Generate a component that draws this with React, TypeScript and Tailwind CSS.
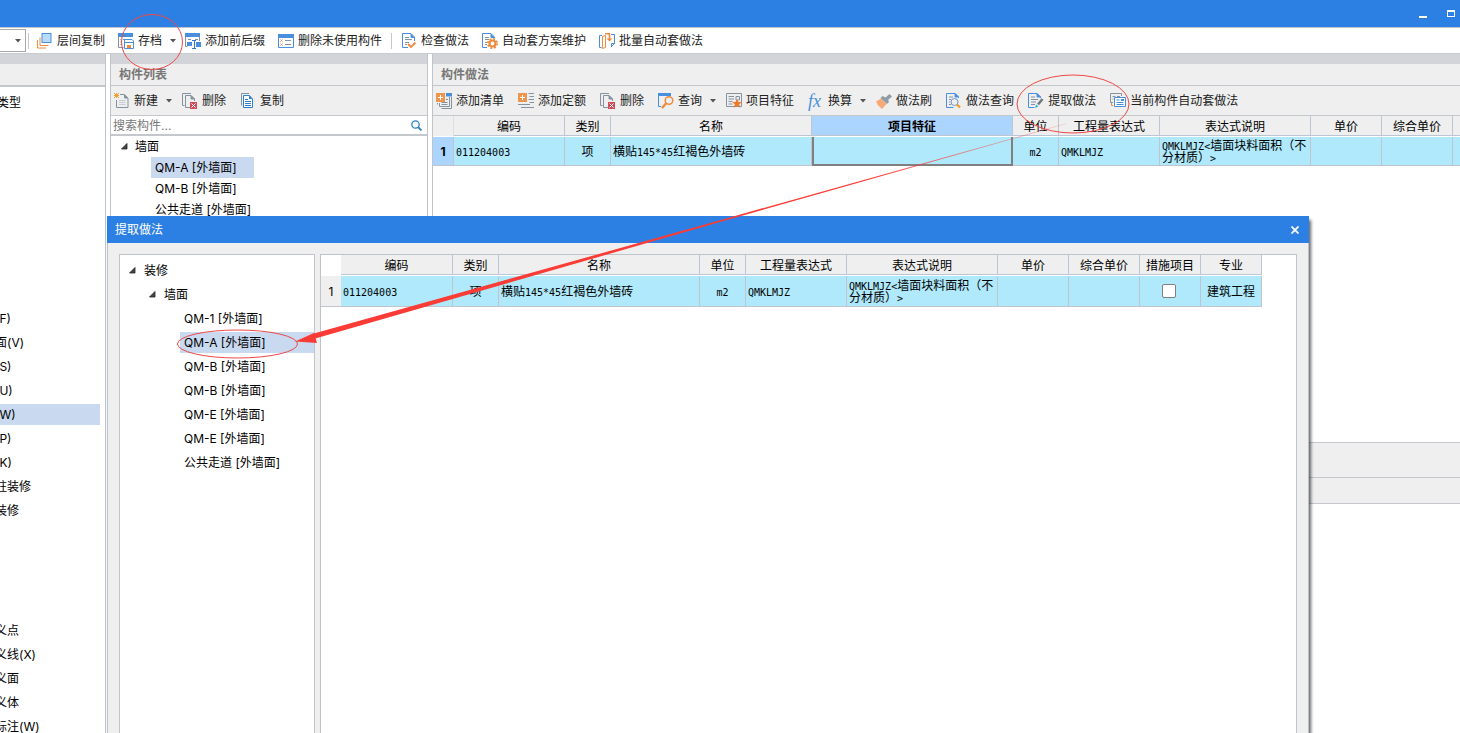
import type { ReactNode } from 'react';

const BLUE = '#4a8fde';
const ORANGE = '#ee8b3c';
const GRAY = '#8592a0';

function Icon({ children }: { children: ReactNode }) {
  return (
    <svg width="16" height="16" viewBox="0 0 16 16" fill="none" className="shrink-0" aria-hidden="true">
      {children}
    </svg>
  );
}

const icons = {
  layers: (
    <Icon>
      <rect x="5" y=".5" width="9" height="9" fill="#b9dbff" stroke={BLUE} />
      <path d="M.5 7v8H9M3 4.500V12.500h8.500" stroke={ORANGE} />
    </Icon>
  ),
  archive: (
    <Icon>
      <path d="M0 0h15v4H0z" fill={BLUE} />
      <path d="M.5 4v10.500h5" stroke={GRAY} />
      <path d="M2.500 6.500h1M2.500 9h1M2.500 11.500h1M5 6.500h2" stroke={GRAY} />
      <path d="M6.500 6.500h7.500l1.500 1.500v7.500h-9z" fill="#fff" stroke={BLUE} />
      <path d="M7 9.500h8" stroke={BLUE} />
      <path d="M9 12h4v3H9z" fill={ORANGE} />
    </Icon>
  ),
  affix: (
    <Icon>
      <path d="M0 0h15v4H0z" fill={BLUE} />
      <path d="M.5 4v9.500h2M14.500 4v4M3 6.500h3M10 6.500h3" stroke={GRAY} />
      <path d="M2 9h5v4H2zM11 9h5v5h-5z" fill={BLUE} />
      <path d="M7 7.500h4M9.500 7.500v8M7 15.500h4" stroke="#2f78cc" />
    </Icon>
  ),
  unused: (
    <Icon>
      <path d="M0 1h16v4H0z" fill={BLUE} />
      <path d="M.5 5v9.500h15V5" stroke={BLUE} />
      <path d="M2.500 6.500l2 2M4.500 6.500l-2 2M2.500 10.500l2 2M4.500 10.500l-2 2" stroke={ORANGE} />
      <path d="M7 7.500h6M7 11.500h6" stroke={GRAY} />
    </Icon>
  ),
  check: (
    <Icon>
      <path d="M13.500 8V4L10 .5H1.500v14H7" stroke={BLUE} />
      <path d="M10 1v3.500h3.500" fill={BLUE} stroke={BLUE} />
      <path d="M4 4.500h4M4 6.500h7M4 9.500h4M4 11.500h2" stroke={GRAY} />
      <path d="M7 11l3 3 4.500-4.500" stroke={ORANGE} strokeWidth="1.800" />
    </Icon>
  ),
  gear: (
    <Icon>
      <path d="M12.500 5V4L9 .5H.5v14H5" stroke={BLUE} />
      <path d="M9 1v3.500h3.500" fill={BLUE} stroke={BLUE} />
      <path d="M3 4.500h4M3 6.500h4M3 9.500h2M3 11.500h2" stroke={GRAY} />
      <circle cx="10.500" cy="10.500" r="4.700" stroke={ORANGE} strokeWidth="1.600" strokeDasharray="2 1.690" />
      <circle cx="10.500" cy="10.500" r="3" stroke={ORANGE} strokeWidth="2.200" />
    </Icon>
  ),
  batch: (
    <Icon>
      <path d="M3 2.500H.5v12h2M12 1.500h3.500v9l-3 3" stroke={BLUE} />
      <path d="M12.500 14v-3.500h3" stroke={BLUE} />
      <path d="M3.500 3.500l3-1v12l-3 1z" fill="#fff" stroke={ORANGE} />
      <path d="M6 .8h4.500v6" stroke={ORANGE} strokeWidth="1.600" />
      <path d="M7.500 5.500l3 3 3-3z" fill={ORANGE} />
    </Icon>
  ),
  create: (
    <Icon>
      <path d="M6 1.500h4.500l3.500 3.500v9.500H2.500V7" stroke={GRAY} />
      <path d="M10.500 1.500V5H14" fill={GRAY} stroke={GRAY} />
      <path d="M5 7.500h6.500M5 9.500h6.500M5 11.500h6.500" stroke="#c5cbd1" />
      <path d="M0 0l5 5M5 0L0 5M2.500 0v5M0 2.500h5" stroke="#f0a030" />
    </Icon>
  ),
  remove: (
    <Icon>
      <path d="M2.500 12.500h-2V.5H9" stroke={GRAY} />
      <path d="M8 14.500H3.500v-12H9L12.500 6v2" stroke={GRAY} />
      <path d="M9 2.500V6h3.500z" fill={GRAY} stroke={GRAY} />
      <path d="M8 9h7v7H8z" fill="#cf4b55" />
      <path d="M9.500 10.500l4 4M13.500 10.500l-4 4" stroke="#fff" />
    </Icon>
  ),
  copy: (
    <Icon>
      <path d="M1.500 12.500V.5H9" stroke={GRAY} />
      <path d="M3.500 2.500h6L12.500 6v8.500h-9z" fill="#fff" stroke="#2f7fd2" />
      <path d="M9 2.500V6h3.500z" fill="#2f7fd2" />
      <path d="M5 6.500h3M5 8.500h6M5 10.500h6M5 12.500h6" stroke="#2f7fd2" />
    </Icon>
  ),
  addList: (
    <Icon>
      <path d="M10 0h6v3.500h-6z" fill={BLUE} />
      <path d="M15.500 4v11.500h-10M3.500 10v3.500h10V4M1.500 10v1.500" stroke={GRAY} />
      <path d="M10 6.500h2M5.500 9.500h6M5.500 11.500h6" stroke={GRAY} />
      <path d="M0 0h9v9H0z" fill="#ee9650" />
      <path d="M4.500 2v5M2 4.500h5" stroke="#fff" />
    </Icon>
  ),
  addQuota: (
    <Icon>
      <path d="M10.500 .5H16M11.500 3.500H16M10.500 6.500H16M11.500 9.500H16M0 11.500h12M3 14.500h13" stroke={GRAY} />
      <path d="M0 0h9v9H0z" fill="#ee9650" />
      <path d="M4.500 2v5M2 4.500h5" stroke="#fff" />
    </Icon>
  ),
  query: (
    <Icon>
      <path d="M0 0h13v3H0z" fill={BLUE} />
      <path d="M.5 3v10.500H3" stroke={BLUE} />
      <circle cx="11" cy="7.500" r="3.800" stroke={ORANGE} strokeWidth="1.500" />
      <path d="M8 10.500l-4 4.500" stroke={ORANGE} strokeWidth="2.400" />
    </Icon>
  ),
  feature: (
    <Icon>
      <path d="M.5.5h15v13H.5z" stroke={GRAY} />
      <path d="M2.500 3.500H8M2.500 6H8M2.500 8.500h4M2.500 11h4" stroke={GRAY} />
      <path d="M10 3.500h3.500V7H10z" stroke={GRAY} />
      <path d="M11 6l1.500 3h3.300l-2.600 2.200 1 3.500-3.200-2-3.200 2 1-3.500L6.200 9h3.300z" fill="#f07820" />
    </Icon>
  ),
  brush: (
    <Icon>
      <path d="M0 8.500l5-3 5.500 5.500L6 16 3.500 13.500 2 12.500z" fill="#f9a878" />
      <path d="M4.500 5l2-2 3 1.500L13.500 1 16 3.500l-4 3.500 1 2-2 2z" fill="#8f9ba5" />
    </Icon>
  ),
  docSearch: (
    <Icon>
      <path d="M12.500 5V4L9 .5H.5v14h7" stroke={BLUE} />
      <path d="M9 .5V4h3.500z" fill={BLUE} stroke={BLUE} />
      <path d="M3 4h4M3 6.500h2M3 9h1M3 11.500h2" stroke={GRAY} />
      <circle cx="8.500" cy="9" r="3.500" stroke="#6e94cf" />
      <path d="M11 11.500l3 3" stroke="#f2a030" strokeWidth="2.400" />
    </Icon>
  ),
  extract: (
    <Icon>
      <path d="M12.500 5V4L9 .5H.5v14h6" stroke={BLUE} />
      <path d="M9 .5V4h3.500z" fill={BLUE} stroke={BLUE} />
      <path d="M3 4h4M3 6.500h7M3 9h5M3 11.500h4" stroke={GRAY} />
      <path d="M10 11.500l4.500-5.500" stroke="#74797e" strokeWidth="2.600" />
      <path d="M7 15l1-3.500 2.500 2z" fill="#35b6d6" />
    </Icon>
  ),
  auto: (
    <Icon>
      <path d="M3 9.500H.5v-9h11V3" stroke={GRAY} />
      <path d="M2.500 3.500h3M7 3.500h3M2.500 6h1" stroke={GRAY} />
      <path d="M4.500 4.500h11v9h-11z" fill="#fff" stroke={BLUE} />
      <path d="M6.500 7h3M6.500 9.500h7M6.500 11.500h7" stroke={BLUE} />
      <path d="M11 6h3v2h-3z" fill={BLUE} />
      <path d="M1.500 10v2.500H3" stroke={ORANGE} />
    </Icon>
  ),
};

function Caret() {
  return (
    <svg width="6" height="4" viewBox="0 0 6 4" className="shrink-0" aria-hidden="true">
      <path d="M0 0h6L3 3.500z" fill="#555" />
    </svg>
  );
}

function ToolButton({ icon, label, menu }: { icon: ReactNode; label: string; menu?: boolean }) {
  return (
    <button type="button" className={menu ? 'flex items-center gap-1 shrink-0 -mr-1' : 'flex items-center gap-1 shrink-0'}>
      {icon}
      <span className="whitespace-nowrap">{label}</span>
      {menu && <span className="ml-1"><Caret /></span>}
    </button>
  );
}

function Expander() {
  return (
    <svg width="7" height="7" viewBox="0 0 7 7" className="shrink-0" aria-hidden="true">
      <path d="M6 .5V6H.5z" fill="#444" stroke="#222" strokeWidth=".8" />
    </svg>
  );
}

const categories = [
  '', '', '', '', '', '', '', '',
  '(F)', '面(V)', '(S)', '(U)', '(W)', '(P)', '(K)', '柱装修', '装修',
  '', '', '', '',
  '义点', '义线(X)', '义面', '义体', '标注(W)',
];

const extractItems = [
  'QM-1 [外墙面]',
  'QM-A [外墙面]',
  'QM-B [外墙面]',
  'QM-B [外墙面]',
  'QM-E [外墙面]',
  'QM-E [外墙面]',
  '公共走道 [外墙面]',
];

// Latin runs are half the width of a CJK character
function Half({ children }: { children: ReactNode }) {
  return <span className="font-['DejaVu_Sans_Mono',monospace] text-[10px] leading-[0px]">{children}</span>;
}

const cell = 'border-r border-b border-[#c0c4cc] px-[2px] pt-[2px] pb-0 font-normal align-middle';
const head = 'border-r border-b border-[#bcc5d4] bg-[#efefef] font-normal p-0 pt-[2px] text-center whitespace-nowrap overflow-hidden';

function Description() {
  return (
    <>
      <Half>QMKLMJZ&lt;</Half>墙面块料面积（不分材质）<Half>&gt;</Half>
    </>
  );
}

function MainTable() {
  return (
    <table className="table-fixed border-separate border-spacing-0 w-[1091px] leading-3 text-black">
      <colgroup>
        <col className="w-[21px]" />
        <col className="w-[111px]" />
        <col className="w-[46px]" />
        <col className="w-[201px]" />
        <col className="w-[201px]" />
        <col className="w-[46px]" />
        <col className="w-[101px]" />
        <col className="w-[151px]" />
        <col className="w-[71px]" />
        <col className="w-[71px]" />
        <col className="w-[71px]" />
      </colgroup>
      <thead>
        <tr className="h-5">
          <th className="bg-[#efefef] border-r border-[#dcdfe4] p-0" />
          <th className={head}>编码</th>
          <th className={head}>类别</th>
          <th className={head}>名称</th>
          <th className="border-r border-b border-[#bcc5d4] bg-[#abd5ff] p-0 pt-[2px] text-center font-bold">项目特征</th>
          <th className={head}>单位</th>
          <th className={head}>工程量表达式</th>
          <th className={head}>表达式说明</th>
          <th className={head}>单价</th>
          <th className={head}>综合单价</th>
          <th className={head}>措施项目</th>
        </tr>
        <tr className="h-px"><td colSpan={11} className="p-0" /></tr>
      </thead>
      <tbody>
        <tr className="h-[29px] bg-[#afe9fb]">
          <td className="bg-[#abd5ff] border-r border-b border-[#c0c4cc] p-0 pt-px text-center font-bold">1</td>
          <td className={cell}><Half>011204003</Half></td>
          <td className={`${cell} text-center`}>项</td>
          <td className={cell}>横贴<Half>145*45</Half>红褐色外墙砖</td>
          <td className="border-x-2 border-b-2 border-[#808080]" />
          <td className={`${cell} text-center`}><Half>m2</Half></td>
          <td className={cell}><Half>QMKLMJZ</Half></td>
          <td className={cell}><Description /></td>
          <td className={cell} />
          <td className={cell} />
          <td className={cell} />
        </tr>
      </tbody>
    </table>
  );
}

function ExtractTable() {
  return (
    <table className="table-fixed border-separate border-spacing-0 w-[941px] leading-3 text-black">
      <colgroup>
        <col className="w-5" />
        <col className="w-[112px]" />
        <col className="w-[46px]" />
        <col className="w-[201px]" />
        <col className="w-[46px]" />
        <col className="w-[101px]" />
        <col className="w-[151px]" />
        <col className="w-[71px]" />
        <col className="w-[71px]" />
        <col className="w-[61px]" />
        <col className="w-[61px]" />
      </colgroup>
      <thead>
        <tr className="h-5">
          <th className="p-0" />
          <th className={head}>编码</th>
          <th className={head}>类别</th>
          <th className={head}>名称</th>
          <th className={head}>单位</th>
          <th className={head}>工程量表达式</th>
          <th className={head}>表达式说明</th>
          <th className={head}>单价</th>
          <th className={head}>综合单价</th>
          <th className={head}>措施项目</th>
          <th className={head}>专业</th>
        </tr>
        <tr className="h-px"><td colSpan={11} className="p-0" /></tr>
      </thead>
      <tbody>
        <tr className="h-[31px] bg-[#afe9fb]">
          <td className="bg-[#efefef] border-b border-[#c0c4cc] p-0 pt-px text-center">1</td>
          <td className={cell}><Half>011204003</Half></td>
          <td className={`${cell} text-center`}>项</td>
          <td className={cell}>横贴<Half>145*45</Half>红褐色外墙砖</td>
          <td className={`${cell} text-center`}><Half>m2</Half></td>
          <td className={cell}><Half>QMKLMJZ</Half></td>
          <td className={cell}><Description /></td>
          <td className={cell} />
          <td className={cell} />
          <td className="border-r border-b border-[#c0c4cc] p-0 pr-[2px]">
            <input
              type="checkbox"
              aria-label="措施项目"
              className="block mx-auto size-[14px] appearance-none rounded-[2px] border border-[#808080] bg-white"
            />
          </td>
          <td className={`${cell} text-center whitespace-nowrap`}>建筑工程</td>
        </tr>
      </tbody>
    </table>
  );
}

function ExtractDialog() {
  return (
    <section
      role="dialog"
      aria-label="提取做法"
      className="absolute left-[107px] right-[151px] top-[216px] bottom-0 flex flex-col bg-[#efefef] shadow-[2px_4px_3px_rgba(0,0,0,0.6)]"
    >
      <header className="h-[27px] shrink-0 flex items-center justify-between bg-[#2d80e3] pl-2 pr-[10px] text-white">
        <h2>提取做法</h2>
        <button type="button" aria-label="关闭">
          <svg width="8" height="8" viewBox="0 0 8 8" aria-hidden="true">
            <path d="M.5.5l7 7M7.500.5l-7 7" stroke="#fff" strokeWidth="1.800" />
          </svg>
        </button>
      </header>
      <div className="flex-1 min-h-0 flex gap-[5px] px-[11px] pt-[11px] border-x border-[#b8c2d2]">
        <ul className="w-[196px] shrink-0 bg-white border border-b-0 border-[#bfc3ca] pt-[3px] text-black">
          <li className="h-6 pt-px flex items-center gap-2 pl-[9px]"><Expander />装修</li>
          <li className="h-6 pt-px flex items-center gap-2 pl-[29px]"><Expander />墙面</li>
          {extractItems.map((name, i) => (
            <li key={i} className="h-6 pt-px pl-[60px] flex items-center">
              <span className={i === 1 ? 'flex-1 h-[21px] flex items-center pl-1 bg-[#c9d9f0]' : 'pl-1'}>{name}</span>
            </li>
          ))}
        </ul>
        <div className="flex-1 min-w-0 overflow-hidden bg-white border border-b-0 border-[#bfc3ca]">
          <ExtractTable />
        </div>
      </div>
    </section>
  );
}

function Annotations() {
  return (
    <svg width="1460" height="733" viewBox="0 0 1460 733" fill="none" className="absolute left-0 top-0 pointer-events-none" aria-hidden="true">
      <defs>
        <linearGradient id="fade" gradientUnits="userSpaceOnUse" x1="1066" y1="123" x2="860" y2="182">
          <stop offset="0" stopColor="#fb3b36" stopOpacity=".2" />
          <stop offset="1" stopColor="#fb3b36" />
        </linearGradient>
      </defs>
      <ellipse cx="152" cy="42" rx="30.500" ry="27.500" stroke="#f04848" />
      <ellipse cx="1073" cy="104" rx="56" ry="29" stroke="#f04848" />
      <ellipse cx="237.500" cy="344" rx="60" ry="14" stroke="#f04848" />
      <path d="M1066 123.200L720 220.200 312 334 313.500 339 720 222 1066 124z" fill="url(#fade)" />
      <path d="M295 341.500L314 333 317 343z" fill="#fb3b36" />
    </svg>
  );
}

export default function App() {
  return (
    <div className="relative h-screen overflow-hidden flex flex-col bg-white text-xs text-[#222] font-['Inter','Noto_Sans_CJK_SC',sans-serif]">
      <header className="h-7 shrink-0 flex items-center justify-end gap-5 pr-[5px] bg-[#2d80e3] border-b border-[#c0c4cc]">
        <button type="button" aria-label="最小化">
          <svg width="8" height="8" viewBox="0 0 8 8"><path d="M0 6h8v2H0z" fill="#fff" /></svg>
        </button>
        <button type="button" aria-label="最大化">
          <svg width="8" height="8" viewBox="0 0 8 8"><path d="M0 0h8v7H0zM1 2v4h6V2z" fill="#fff" fillRule="evenodd" /></svg>
        </button>
      </header>

      <nav className="h-[26px] shrink-0 flex items-center gap-[13px] bg-white border-b border-[#c8cbd0]">
        <div className="flex items-center gap-[2px] -mr-[5px]">
          <button type="button" aria-label="楼层" className="w-[26px] h-[23px] flex items-center justify-end pr-1 border border-l-0 border-[#a9a9a9] bg-white">
            <Caret />
          </button>
          <span className="w-px h-4 bg-[#c8c8c8]" />
        </div>
        <ToolButton icon={icons.layers} label="层间复制" />
        <ToolButton icon={icons.archive} label="存档" menu />
        <ToolButton icon={icons.affix} label="添加前后缀" />
        <ToolButton icon={icons.unused} label="删除未使用构件" />
        <span className="w-px h-4 -mx-1 bg-[#c8c8c8]" />
        <ToolButton icon={icons.check} label="检查做法" />
        <ToolButton icon={icons.gear} label="自动套方案维护" />
        <ToolButton icon={icons.batch} label="批量自动套做法" />
      </nav>

      <div className="flex-1 min-h-0 flex">
        <aside className="w-[106px] shrink-0 border-r border-[#bfc3ca] overflow-hidden">
          <div className="h-[10px] bg-[#d3d4da]" />
          <div className="h-[23px] bg-[#efefef] border-b-2 border-[#c4c7cc]" />
          <ul className="pt-[3px] text-black">
            <li className="h-6 pt-px -ml-[3px] flex items-center">类型</li>
            {categories.map((name, i) => (
              <li key={i} className="h-6 pt-px flex items-center">
                <span className={i === 12 ? 'w-[100px] h-[21px] flex items-center bg-[#c9d9f0]' : ''}>
                  <span className="-ml-[5px]">{name}</span>
                </span>
              </li>
            ))}
          </ul>
        </aside>

        <section className="ml-1 w-[318px] shrink-0 flex flex-col border-x border-[#bfc3ca]">
          <div className="h-[10px] shrink-0 bg-[#d3d4da]" />
          <h2 className="h-[22px] shrink-0 flex items-center pl-2 bg-[#efefef] border-b border-[#c4c7cc] font-bold text-[#777]">构件列表</h2>
          <div className="h-[30px] shrink-0 flex items-center gap-[14px] pl-[3px] bg-[#efefef] border-b border-[#c4c7cc]">
            <ToolButton icon={icons.create} label="新建" menu />
            <ToolButton icon={icons.remove} label="删除" />
            <ToolButton icon={icons.copy} label="复制" />
          </div>
          <div className="h-5 shrink-0 flex items-center pl-[2px] pr-[5px] border-b-2 border-[#c4c7cc]">
            <input
              type="text"
              aria-label="搜索构件"
              placeholder="搜索构件..."
              className="flex-1 min-w-0 h-[18px] outline-none placeholder:text-[#777]"
            />
            <svg width="11" height="11" viewBox="0 0 11 11" fill="none" aria-hidden="true">
              <circle cx="4.500" cy="4.500" r="3.700" stroke="#2c84c2" strokeWidth="1.300" />
              <path d="M7 7l3.500 3.500" stroke="#2c84c2" strokeWidth="1.800" />
            </svg>
          </div>
          <ul className="text-black">
            <li className="h-[21px] flex items-center gap-[7px] pl-[10px]"><Expander />墙面</li>
            <li className="h-[21px] ml-10 w-[103px] flex items-center pl-1 bg-[#c9d9f0]">QM-A [外墙面]</li>
            <li className="h-[21px] ml-10 flex items-center pl-1">QM-B [外墙面]</li>
            <li className="h-[21px] ml-10 flex items-center pl-1">公共走道 [外墙面]</li>
          </ul>
        </section>

        <main className="ml-1 flex-1 min-w-0 flex flex-col border-l border-[#bfc3ca] overflow-hidden">
          <div className="h-[10px] shrink-0 bg-[#d3d4da]" />
          <h2 className="h-[22px] shrink-0 flex items-center pl-2 bg-[#efefef] border-b border-[#c4c7cc] font-bold text-[#777]">构件做法</h2>
          <div className="h-[30px] shrink-0 flex items-center gap-[14px] pl-[3px] bg-[#efefef] border-b border-[#c4c7cc]">
            <ToolButton icon={icons.addList} label="添加清单" />
            <ToolButton icon={icons.addQuota} label="添加定额" />
            <ToolButton icon={icons.remove} label="删除" />
            <ToolButton icon={icons.query} label="查询" menu />
            <ToolButton icon={icons.feature} label="项目特征" />
            <ToolButton
              icon={<i className="w-4 shrink-0 text-left font-['Liberation_Serif',serif] text-lg leading-4 text-[#4a8fde]">fx</i>}
              label="换算"
              menu
            />
            <ToolButton icon={icons.brush} label="做法刷" />
            <ToolButton icon={icons.docSearch} label="做法查询" />
            <ToolButton icon={icons.extract} label="提取做法" />
            <ToolButton icon={icons.auto} label="当前构件自动套做法" />
          </div>
          <div className="flex-1 min-h-0 overflow-hidden">
            <MainTable />
          </div>
          <div className="h-[291px] shrink-0 border-t border-[#c4c7cc]">
            <div className="h-[35px] bg-[#efefef] border-b border-[#c4c7cc]" />
            <div className="h-[26px] bg-[#efefef] border-b border-[#c4c7cc]" />
          </div>
        </main>
      </div>

      <ExtractDialog />
      <Annotations />
    </div>
  );
}
